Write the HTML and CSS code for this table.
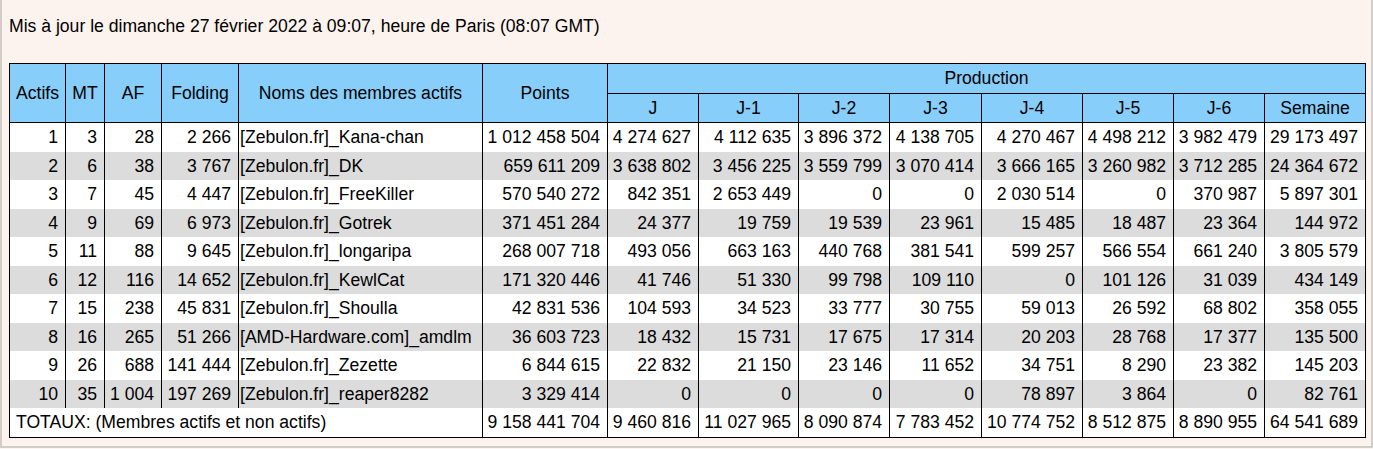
FILE: index.html
```html
<!DOCTYPE html>
<html lang="fr">
<head>
<meta charset="utf-8">
<title>Statistiques Folding</title>
<link rel="stylesheet" href="styles.css">
</head>
<body>
<div class="frame">
  <p class="updated">Mis à jour le dimanche 27 février 2022 à 09:07, heure de Paris (08:07 GMT)</p>
  <table class="stats">
    <colgroup>
      <col class="c-actifs"><col class="c-mt"><col class="c-af"><col class="c-folding"><col class="c-name"><col class="c-points">
      <col class="c-j"><col class="c-j1"><col class="c-j2"><col class="c-j3"><col class="c-j4"><col class="c-j5"><col class="c-j6"><col class="c-sem">
    </colgroup>
    <thead>
      <tr>
        <th rowspan="2">Actifs</th>
        <th rowspan="2">MT</th>
        <th rowspan="2">AF</th>
        <th rowspan="2">Folding</th>
        <th rowspan="2">Noms des membres actifs</th>
        <th rowspan="2">Points</th>
        <th colspan="8">Production</th>
      </tr>
      <tr>
        <th>J</th><th>J-1</th><th>J-2</th><th>J-3</th><th>J-4</th><th>J-5</th><th>J-6</th><th>Semaine</th>
      </tr>
    </thead>
    <tbody>
      <tr class="odd"><td>1</td><td>3</td><td>28</td><td>2 266</td><td class="name">[Zebulon.fr]_Kana-chan</td><td>1 012 458 504</td><td>4 274 627</td><td>4 112 635</td><td>3 896 372</td><td>4 138 705</td><td>4 270 467</td><td>4 498 212</td><td>3 982 479</td><td>29 173 497</td></tr>
      <tr class="even"><td>2</td><td>6</td><td>38</td><td>3 767</td><td class="name">[Zebulon.fr]_DK</td><td>659 611 209</td><td>3 638 802</td><td>3 456 225</td><td>3 559 799</td><td>3 070 414</td><td>3 666 165</td><td>3 260 982</td><td>3 712 285</td><td>24 364 672</td></tr>
      <tr class="odd"><td>3</td><td>7</td><td>45</td><td>4 447</td><td class="name">[Zebulon.fr]_FreeKiller</td><td>570 540 272</td><td>842 351</td><td>2 653 449</td><td>0</td><td>0</td><td>2 030 514</td><td>0</td><td>370 987</td><td>5 897 301</td></tr>
      <tr class="even"><td>4</td><td>9</td><td>69</td><td>6 973</td><td class="name">[Zebulon.fr]_Gotrek</td><td>371 451 284</td><td>24 377</td><td>19 759</td><td>19 539</td><td>23 961</td><td>15 485</td><td>18 487</td><td>23 364</td><td>144 972</td></tr>
      <tr class="odd"><td>5</td><td>11</td><td>88</td><td>9 645</td><td class="name">[Zebulon.fr]_longaripa</td><td>268 007 718</td><td>493 056</td><td>663 163</td><td>440 768</td><td>381 541</td><td>599 257</td><td>566 554</td><td>661 240</td><td>3 805 579</td></tr>
      <tr class="even"><td>6</td><td>12</td><td>116</td><td>14 652</td><td class="name">[Zebulon.fr]_KewlCat</td><td>171 320 446</td><td>41 746</td><td>51 330</td><td>99 798</td><td>109 110</td><td>0</td><td>101 126</td><td>31 039</td><td>434 149</td></tr>
      <tr class="odd"><td>7</td><td>15</td><td>238</td><td>45 831</td><td class="name">[Zebulon.fr]_Shoulla</td><td>42 831 536</td><td>104 593</td><td>34 523</td><td>33 777</td><td>30 755</td><td>59 013</td><td>26 592</td><td>68 802</td><td>358 055</td></tr>
      <tr class="even"><td>8</td><td>16</td><td>265</td><td>51 266</td><td class="name">[AMD-Hardware.com]_amdlm</td><td>36 603 723</td><td>18 432</td><td>15 731</td><td>17 675</td><td>17 314</td><td>20 203</td><td>28 768</td><td>17 377</td><td>135 500</td></tr>
      <tr class="odd"><td>9</td><td>26</td><td>688</td><td>141 444</td><td class="name">[Zebulon.fr]_Zezette</td><td>6 844 615</td><td>22 832</td><td>21 150</td><td>23 146</td><td>11 652</td><td>34 751</td><td>8 290</td><td>23 382</td><td>145 203</td></tr>
      <tr class="even"><td>10</td><td>35</td><td>1 004</td><td>197 269</td><td class="name">[Zebulon.fr]_reaper8282</td><td>3 329 414</td><td>0</td><td>0</td><td>0</td><td>0</td><td>78 897</td><td>3 864</td><td>0</td><td>82 761</td></tr>
      <tr class="totals"><td colspan="5" class="label">TOTAUX: (Membres actifs et non actifs)</td><td>9 158 441 704</td><td>9 460 816</td><td>11 027 965</td><td>8 090 874</td><td>7 783 452</td><td>10 774 752</td><td>8 512 875</td><td>8 890 955</td><td>64 541 689</td></tr>
    </tbody>
  </table>
</div>
</body>
</html>
```

FILE: styles.css
```css
html, body {
  margin: 0;
  padding: 0;
  background: #fdf5f1;
}

.frame {
  box-sizing: border-box;
  width: 1373px;
  height: 448px;
  padding: 0 7px;
  background: #fdf3ee;
  border-left: 2px solid #d3cdca;
  border-right: 2px solid #d3cdca;
  border-bottom: 2px solid #d3cdca;
  font-family: "Liberation Sans", Arial, sans-serif;
  font-size: 17.6px;
  color: #000;
}

.updated {
  margin: 0;
  padding-top: 16px;
  line-height: 20.2px;
  height: 47px;
}

.stats {
  table-layout: fixed;
  width: 1357px;
  border-collapse: collapse;
  border: 1px solid #000;
  line-height: 20.5px;
  white-space: nowrap;
}

.stats th {
  background: #87cefa;
  font-weight: normal;
  text-align: center;
  vertical-align: middle;
  border: 1px solid #000;
  padding: 4px 2px;
}

.stats td {
  text-align: right;
  padding: 4px 7px 4px 2px;
  border-left: 1px solid #000;
  border-right: 1px solid #000;
}

.stats td.name {
  text-align: left;
  padding-left: 1px;
}

.stats td.label {
  text-align: left;
  padding-left: 6px;
}

.stats tr.odd td,
.stats tr.totals td {
  background: #ffffff;
}

.stats tr.even td {
  background: #dcdcdc;
}

.c-actifs { width: 56px; }
.c-mt { width: 39px; }
.c-af { width: 57px; }
.c-folding { width: 77px; }
.c-name { width: 244px; }
.c-points { width: 125px; }
.c-j { width: 91px; }
.c-j1 { width: 100px; }
.c-j2 { width: 91px; }
.c-j3 { width: 92px; }
.c-j4 { width: 101px; }
.c-j5 { width: 91px; }
.c-j6 { width: 91px; }
.c-sem { width: 101px; }
```
